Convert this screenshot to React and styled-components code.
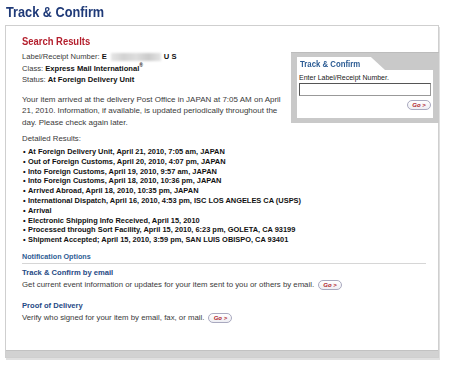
import React from "react";
import styled, { createGlobalStyle, css } from "styled-components";

const events = [
  "At Foreign Delivery Unit, April 21, 2010, 7:05 am, JAPAN",
  "Out of Foreign Customs, April 20, 2010, 4:07 pm, JAPAN",
  "Into Foreign Customs, April 19, 2010, 9:57 am, JAPAN",
  "Into Foreign Customs, April 18, 2010, 10:36 pm, JAPAN",
  "Arrived Abroad, April 18, 2010, 10:35 pm, JAPAN",
  "International Dispatch, April 16, 2010, 4:53 pm, ISC LOS ANGELES CA (USPS)",
  "Arrival",
  "Electronic Shipping Info Received, April 15, 2010",
  "Processed through Sort Facility, April 15, 2010, 6:23 pm, GOLETA, CA 93199",
  "Shipment Accepted; April 15, 2010, 3:59 pm, SAN LUIS OBISPO, CA 93401",
];

const GoButton = () => <Go>Go &gt;</Go>;

const App = () => {
  return (
    <Page>
      <Global />
      <Title>Track &amp; Confirm</Title>
      <Panel>
        <Body>
          <Widget>
            <Tab>
              <TabText>Track &amp; Confirm</TabText>
            </Tab>
            <WidgetBody>
              <Small>Enter Label/Receipt Number.</Small>
              <Input type="text" />
              <WidgetFoot>
                <GoButton />
              </WidgetFoot>
            </WidgetBody>
          </Widget>

          <Heading>Search Results</Heading>
          <Line>
            Label/Receipt Number: <b>E</b>
            <Blur />
            <b>U S</b>
          </Line>
          <Line>
            Class: <b>Express Mail International<Sup>®</Sup></b>
          </Line>
          <Line>
            Status: <b>At Foreign Delivery Unit</b>
          </Line>

          <Para>
            Your item arrived at the delivery Post Office in JAPAN at 7:05 AM on April
            <br />
            21, 2010. Information, if available, is updated periodically throughout the
            <br />
            day. Please check again later.
          </Para>

          <Detailed>Detailed Results:</Detailed>
          <List>
            {events.map((e) => (
              <Item key={e}>{e}</Item>
            ))}
          </List>

          <Section>Notification Options</Section>
          <SubHead>Track &amp; Confirm by email</SubHead>
          <Row>
            Get current event information or updates for your item sent to you or others by email.
            <GoButton />
          </Row>
          <SubHead $gap>Proof of Delivery</SubHead>
          <Row>
            Verify who signed for your item by email, fax, or mail.
            <GoButton />
          </Row>
        </Body>
        <Footer />
      </Panel>
    </Page>
  );
};
export default App;

const Global = createGlobalStyle`
  body {
    margin: 0;
    background: #fff;
    font-family: "Liberation Sans", Arial, sans-serif;
    color: #3a3a3a;
  }
`;

// no narrow face installed: squeeze Arial bold to look like Helvetica Condensed
const condensed = css`
  font-family: "Liberation Sans", Arial, sans-serif;
  font-weight: bold;
  display: inline-block;
  white-space: nowrap;
  transform: scaleX(0.82);
  transform-origin: left center;
`;

const Page = styled.div`
  width: 449px;
  height: 366px;
  overflow: hidden;
  padding: 2px 0 0 5px;
  box-sizing: border-box;
`;

const Title = styled.h1`
  ${condensed};
  margin: 0 0 0 1px;
  font-size: 15.5px;
  line-height: 20px;
  color: #1f3a78;
  height: 23px;
`;

const Panel = styled.div`
  width: 432px;
  border: 1px solid #cfcfcf;
  box-shadow: 1px 2px 0 #e0e0e0;
  background: #fff;
`;

const Body = styled.div`
  padding: 8px 6px 0 16px;
  height: 316px;
  font-size: 7.8px;
  line-height: 11.5px;
  b {
    color: #111;
  }
`;

const Widget = styled.div`
  float: right;
  margin: 18px -7px 4px 6px;
  width: 148px;
  height: 71px;
  box-sizing: border-box;
  background: #c9c9c9;
  border-top: 1px solid #bcbcbc;
  padding: 4px 6px 5px 6px;
`;

const Tab = styled.div`
  width: 88px;
  height: 13px;
  background: #fff;
  clip-path: polygon(0 0, 84% 0, 100% 100%, 0 100%);
  padding-left: 3px;
  box-sizing: border-box;
`;

const TabText = styled.span`
  ${condensed};
  font-size: 9.5px;
  line-height: 13px;
  color: #2b5b93;
`;

const WidgetBody = styled.div`
  background: #fff;
  height: 48px;
  padding: 3px 2px 0 2px;
  box-sizing: border-box;
`;

const Small = styled.div`
  font-size: 7px;
  line-height: 9px;
  color: #222;
`;

const Input = styled.input`
  display: block;
  width: 100%;
  height: 13px;
  margin: 1px 0 4px;
  box-sizing: border-box;
  border: 1px solid #999;
  border-top-color: #555;
  border-left-color: #555;
  padding: 0;
`;

const WidgetFoot = styled.div`
  display: flex;
  justify-content: flex-end;
`;

const Go = styled.span`
  display: inline-flex;
  align-items: center;
  justify-content: center;
  width: 24px;
  height: 10px;
  border: 1px solid #a9a9bf;
  border-radius: 6px;
  box-sizing: border-box;
  background: linear-gradient(#fff, #eeeef3);
  color: #b01c2a;
  font-weight: bold;
  font-style: italic;
  font-size: 6px;
  line-height: 1;
  margin-left: 4px;
`;

const Heading = styled.h2`
  ${condensed};
  display: block;
  margin: 0 0 2px;
  font-size: 11.5px;
  line-height: 15px;
  color: #b41f2d;
`;

const Line = styled.div`
  font-size: 7.6px;
  line-height: 11.5px;
  display: flex;
  align-items: center;
  white-space: pre;
`;

const Blur = styled.span`
  display: inline-block;
  width: 50px;
  height: 8px;
  margin: 0 3px 0 4px;
  background: linear-gradient(90deg, #e6e6e6, #d2d2d2 25%, #dedede 50%, #cbcbcb 75%, #e4e4e4);
  filter: blur(1px);
`;

const Sup = styled.sup`
  font-size: 5px;
  line-height: 0;
`;

const Para = styled.p`
  margin: 8px 0 0;
  font-size: 8px;
  line-height: 11.5px;
  white-space: nowrap;
`;

const Detailed = styled.div`
  margin-top: 5px;
  line-height: 11px;
`;

const List = styled.ul`
  margin: 3px 0 0;
  padding: 0;
  list-style: none;
`;

const Item = styled.li`
  font-size: 7.43px;
  line-height: 9.8px;
  height: 9.8px;
  font-weight: bold;
  color: #111;
  white-space: nowrap;
  &::before {
    content: "•";
    display: inline-block;
    width: 5px;
    margin-left: 1px;
  }
`;

const Section = styled.div`
  margin: 6px 6px 0 0;
  padding-bottom: 1px;
  border-bottom: 1px solid #d6d6d6;
  font-size: 7.2px;
  font-weight: bold;
  color: #2e5d94;
  line-height: 11px;
`;

const SubHead = styled.div`
  margin-top: ${(p) => (p.$gap ? "8.5px" : "3px")};
  font-size: 7.6px;
  font-weight: bold;
  color: #1f4a85;
  line-height: 11px;
`;

const Row = styled.div`
  display: flex;
  align-items: center;
  line-height: 14px;
  height: 14px;
`;

const Footer = styled.div`
  height: 6px;
  background: #d2d2d2;
  border-top: 1px solid #c2c2c2;
`;
